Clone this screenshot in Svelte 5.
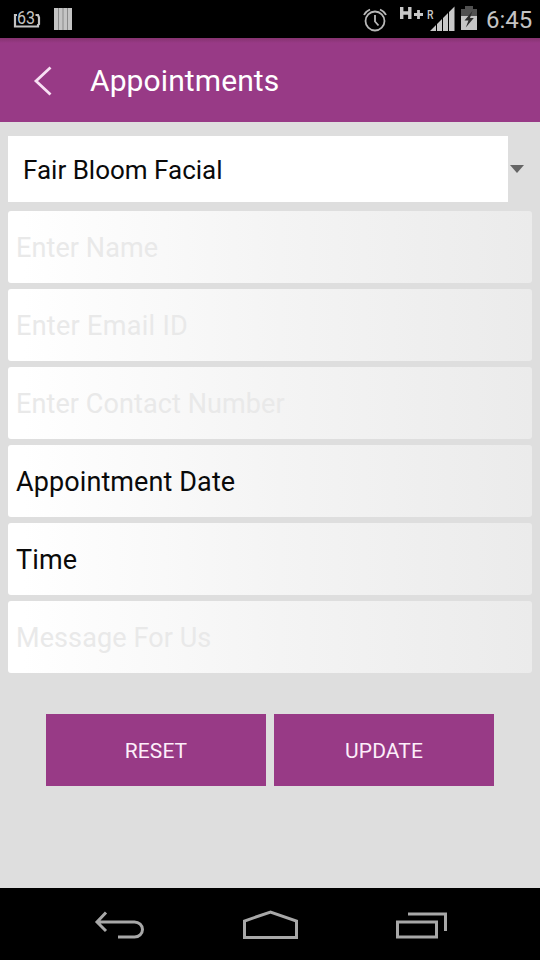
<script>
  let service = $state("Fair Bloom Facial");
  let form = $state({ name: "", email: "", contact: "", message: "" });

  function reset() {
    form = { name: "", email: "", contact: "", message: "" };
  }
</script>

<div class="screen">
  <div class="status">
    <svg class="level" width="28" height="22" viewBox="0 0 28 22">
      <path d="M4 7H2V18.500H25V17L26 16V9.500L25 7H22.500" />
      <text x="4" y="15.500" textLength="18" lengthAdjust="spacingAndGlyphs">63</text>
    </svg>
    <svg class="bars" width="18" height="22" viewBox="0 0 18 22">
      <path d="M0 0h18v22H0z" fill="#c4c4c4" />
      <path d="M4.500 0v22M9 0v22M13.500 0v22" stroke="#8a8a8a" />
    </svg>

    <svg class="alarm" width="24" height="24" viewBox="0 0 24 24">
      <circle cx="12" cy="13" r="9.5" />
      <path d="M12 7v6.500l3.500 4M1 7Q2.500 3.500 7 1.500M17 1.500Q21.500 3.500 23 7" />
    </svg>
    <svg class="signal" width="56" height="26" viewBox="0 0 56 26">
      <path d="M1.700 1v12M9.800 1v12M2 7h8" stroke="#c8c8c8" stroke-width="3.400" />
      <path d="M14 8.500h9M18.500 4v9" stroke="#c8c8c8" stroke-width="2.800" />
      <text x="27" y="12.500" textLength="6.500" lengthAdjust="spacingAndGlyphs">R</text>
      <path
        d="M30 25l6-6v6zM37 25v-7l5-5V25zM43 25V12l5-5V25zM49 25V6L54.500 .5V25z"
        fill="#c8c8c8"
      />
    </svg>
    <svg class="battery" width="16" height="24" viewBox="0 0 16 24">
      <path d="M4 0h8v3h4v8H0V3h4z" fill="#505050" />
      <path d="M0 10h16v14H0z" fill="#c4c4c4" />
      <path d="M11.500 5L3.500 14.500h4l-2.700 7 8-9.500H9z" fill="#2c2c2c" />
    </svg>
    <span class="clock">6:45</span>
  </div>

  <header>
    <button class="back" aria-label="Back">
      <svg width="18" height="30" viewBox="0 0 18 30">
        <path d="M16.500 1.500L2 15l14.500 13.500" />
      </svg>
    </button>
    <h1>Appointments</h1>
  </header>

  <main>
    <button class="spinner">
      <span>{service}</span>
      <svg width="14" height="8" viewBox="0 0 14 8">
        <path d="M0 0h14L7 8z" fill="#656565" />
      </svg>
    </button>

    <input class="field" placeholder="Enter Name" bind:value={form.name} />
    <input class="field email" placeholder="Enter Email ID" bind:value={form.email} />
    <input class="field" placeholder="Enter Contact Number" bind:value={form.contact} />
    <button class="field">Appointment Date</button>
    <button class="field">Time</button>
    <input class="field" placeholder="Message For Us" bind:value={form.message} />

    <div class="actions">
      <button onclick={reset}>RESET</button>
      <button>UPDATE</button>
    </div>
  </main>

  <nav>
    <button aria-label="Back">
      <svg width="52" height="28" viewBox="0 0 52 28">
        <path d="M12 1.500L3 11l9 9M4 11h36.500a8 7.500 0 0 1 0 15H24" />
      </svg>
    </button>
    <button aria-label="Home">
      <svg width="56" height="30" viewBox="0 0 56 30">
        <path d="M2.500 27.500V11L28.500 2l26 9v16.500z" />
      </svg>
    </button>
    <button aria-label="Recent apps">
      <svg width="52" height="28" viewBox="0 0 52 28">
        <path d="M1.500 11h39v15h-39zM12 3h37.500V20" />
      </svg>
    </button>
  </nav>
</div>

<style>
  :global(body) {
    margin: 0;
    background: #000;
  }

  .screen {
    width: 540px;
    height: 960px;
    display: flex;
    flex-direction: column;
    overflow: hidden;
    background: #dedede;
    font-family: Roboto, sans-serif;
  }

  button,
  input {
    box-sizing: border-box;
    margin: 0;
    padding: 0;
    border: none;
    border-radius: 0;
    outline: none;
    background: none;
    color: inherit;
    font: inherit;
  }

  svg {
    display: block;
    flex: none;
    fill: none;
    overflow: visible;
  }

  .status {
    height: 38px;
    flex: none;
    display: flex;
    align-items: center;
    box-sizing: border-box;
    padding: 0 9px 0 13px;
    background: #000;
    color: #c4c4c4;
  }

  .level path {
    stroke: #c4c4c4;
    stroke-width: 2.2;
  }

  .level text {
    fill: #c4c4c4;
    font-size: 18px;
  }

  .bars {
    margin-left: 13px;
  }

  .alarm {
    margin-left: auto;
    margin-top: 2px;
    stroke: #b8b8b8;
    stroke-width: 1.8;
  }

  .signal {
    margin-left: 13px;
  }

  .signal text {
    fill: #c8c8c8;
    font-size: 12px;
    font-weight: 500;
  }

  .battery {
    margin-left: 5px;
    margin-bottom: 2px;
  }

  .clock {
    width: 45px;
    margin-left: 9px;
    padding-top: 2px;
    font-size: 24px;
    white-space: nowrap;
  }

  header {
    height: 84px;
    flex: none;
    display: flex;
    align-items: center;
    background: linear-gradient(#85336f, #983a86 5px);
    color: #fff;
  }

  .back {
    margin-left: 34px;
    padding-top: 2px;
  }

  .back path {
    stroke: #f8e0f4;
    stroke-width: 2.8;
  }

  h1 {
    margin: 0 0 0 38px;
    font-size: 30px;
    font-weight: 400;
    letter-spacing: 0.1px;
  }

  main {
    flex: 1;
    display: flex;
    flex-direction: column;
    gap: 6px;
    padding: 14px 8px 0;
    font-size: 27px;
    color: #0a0a0a;
  }

  .spinner {
    height: 66px;
    margin-bottom: 3px;
    display: flex;
    align-items: center;
    gap: 2px;
    text-align: left;
  }

  .spinner span {
    width: 500px;
    box-sizing: border-box;
    padding: 2px 0 0 15px;
    background: #fff;
    font-size: 26px;
    line-height: 64px;
  }

  .field {
    height: 72px;
    padding: 2px 8px 0;
    border-radius: 3px;
    background: linear-gradient(90deg, #fff 3%, #f4f4f4 52%, #ebebeb);
    letter-spacing: 0.1px;
    text-align: left;
  }

  .email {
    letter-spacing: 0.3px;
  }

  .field::placeholder {
    color: #e9e9e9;
    opacity: 1;
  }

  .actions {
    display: flex;
    justify-content: center;
    gap: 8px;
    margin-top: 35px;
  }

  .actions button {
    width: 220px;
    height: 72px;
    padding-top: 2px;
    background: #983a86;
    color: #fdeefa;
    font-size: 21px;
    letter-spacing: 0.1px;
  }

  nav {
    height: 72px;
    flex: none;
    display: flex;
    align-items: center;
    justify-content: space-between;
    box-sizing: border-box;
    padding: 2px 92px 0;
    background: #000;
  }

  nav button:first-child {
    padding-left: 2px;
  }

  nav button:nth-child(2) {
    padding-right: 2px;
  }

  nav path {
    stroke: #a8a8a8;
    stroke-width: 3;
  }
</style>
